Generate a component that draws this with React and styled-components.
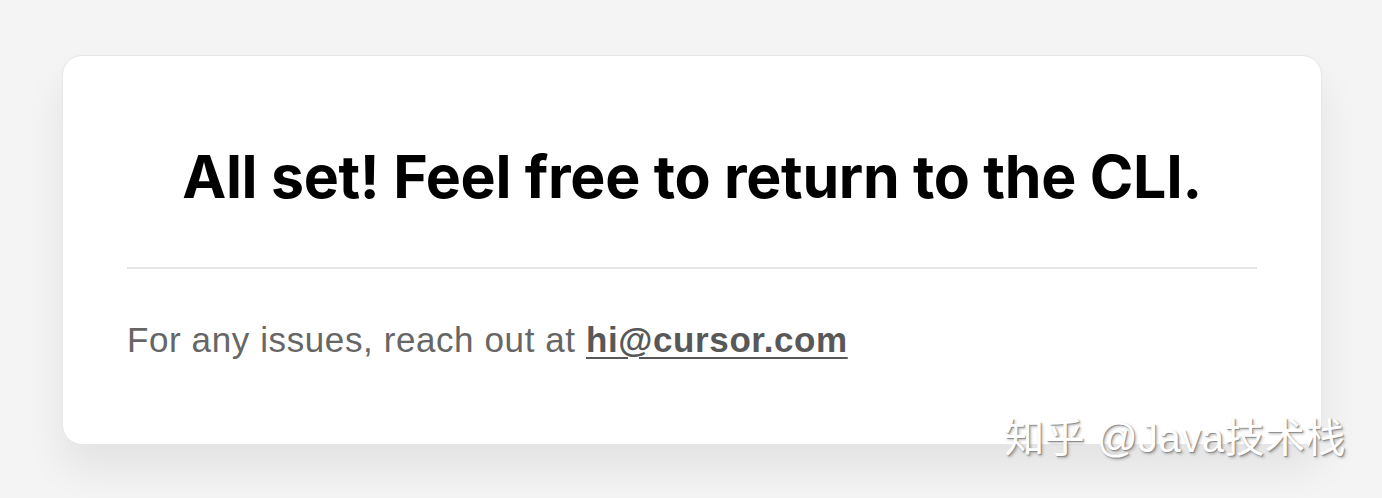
import React from "react"
import styled, { createGlobalStyle } from "styled-components"

const GlobalStyle = createGlobalStyle`
  html, body {
    margin: 0;
    padding: 0;
    background: #f4f4f4;
  }
  body {
    font-family: Inter, "Liberation Sans", sans-serif;
  }
`

const Page = styled.div`
  position: relative;
  width: 1382px;
  height: 498px;
  overflow: hidden;
  padding: 55px 0 0 62px;
  box-sizing: border-box;
`

const Card = styled.div`
  width: 1260px;
  height: 390px;
  box-sizing: border-box;
  background: #fff;
  border: 1px solid #e6e6e6;
  border-radius: 20px;
  box-shadow: 0 24px 40px rgba(0, 0, 0, 0.07);
  padding: 0 64px;
  display: flex;
  flex-direction: column;
`

const Title = styled.h1`
  margin: 86px 0 0;
  text-align: center;
  font-family: Inter, "Liberation Sans", sans-serif;
  font-weight: 700;
  font-size: 59px;
  line-height: 70px;
  letter-spacing: -0.3px;
  color: #000;
`

const Divider = styled.hr`
  margin: 55px 0 0;
  border: none;
  border-top: 2px solid #e5e5e5;
`

const Note = styled.p`
  margin: 51px 0 0;
  font-family: "Liberation Sans", sans-serif;
  font-size: 35px;
  line-height: 40px;
  color: #666;
  letter-spacing: 0.6px;

  a {
    color: #585858;
    font-weight: 700;
    text-decoration: underline;
    text-underline-offset: 5px;
    text-decoration-thickness: 2px;
  }
`

const Watermark = styled.div`
  position: absolute;
  right: 36px;
  bottom: 34px;
  font-family: "Liberation Sans", "Noto Sans CJK SC", sans-serif;
  font-size: 40px;
  color: #fff;
  text-shadow: 1px 1px 1px #8a8a8a, 2px 2px 3px rgba(0, 0, 0, 0.25);
  letter-spacing: 0.5px;
`

export default function App() {
  return (
    <>
      <GlobalStyle />
      <Page>
        <Card>
          <Title>All set! Feel free to return to the CLI.</Title>
          <Divider />
          <Note>
            For any issues, reach out at <a href="mailto:hi@cursor.com">hi@cursor.com</a>
          </Note>
        </Card>
        <Watermark>知乎 @Java技术栈</Watermark>
      </Page>
    </>
  )
}
